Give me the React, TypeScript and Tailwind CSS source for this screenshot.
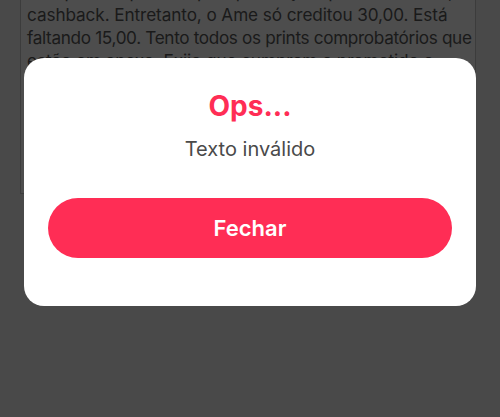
export default function App() {
  return (
    <div className="relative h-[417px] w-[500px] overflow-hidden bg-[#494949] font-['Inter',sans-serif]">
      {/* Textarea behind the overlay */}
      <div className="ml-[20px] mt-[-40px] h-[234px] w-[456px] overflow-hidden border border-[#3c3c3c] bg-[#4d4d4d] px-[6px]">
        <p className="whitespace-nowrap pt-[19px] text-[17.2px] leading-[23px] tracking-[-0.1px] text-[#1a1a1a]">
          <span className="block">Comprei um produto pela promoção que oferecia 45,00 de</span>
          <span className="block">cashback. Entretanto, o Ame só creditou 30,00. Está</span>
          <span className="block tracking-[-0.35px]">faltando 15,00. Tento todos os prints comprobatórios que</span>
          <span className="block">estão em anexo. Exijo que cumpram o prometido e</span>
          <span className="block">creditem o restante.</span>
        </p>
      </div>

      {/* Modal */}
      <div className="absolute left-[24px] top-[58px] flex h-[248px] w-[452px] flex-col items-center rounded-[20px] bg-white">
        <h2 className="mt-[31px] text-[28px] font-bold leading-[34px] text-[#ff2d55]">Ops...</h2>
        <p className="mt-[14px] text-[20px] leading-[24px] text-[#4a4a4a]">Texto inválido</p>
        <button className="mt-[37px] flex h-[60px] w-[404px] items-center justify-center rounded-full bg-[#ff2d55] text-[22px] font-semibold text-white">
          Fechar
        </button>
      </div>
    </div>
  );
}
